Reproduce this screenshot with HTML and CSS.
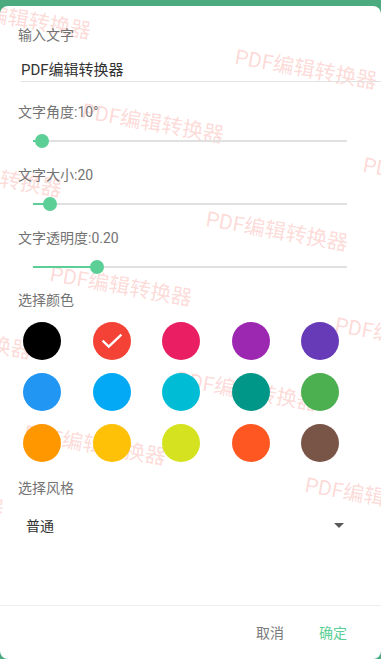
FILE: index.html
```html
<!DOCTYPE html>
<html lang="zh">
<head>
    <meta charset="UTF-8">
    <meta name="viewport" content="width=device-width, initial-scale=1.0">
    <title>水印设置</title>
    <link rel="stylesheet" href="styles.css">
</head>
<body>
    <div class="dialog">
        <!-- watermark preview, drawn behind the form -->
        <div class="watermarks">
            <span class="wm" style="left:-49px;top:-9px">PDF编辑转换器</span>
            <span class="wm" style="left:237px;top:41px">PDF编辑转换器</span>
            <span class="wm" style="left:84px;top:95px">PDF编辑转换器</span>
            <span class="wm" style="left:365px;top:149px">PDF编辑转换器</span>
            <span class="wm" style="left:-78px;top:149px">PDF编辑转换器</span>
            <span class="wm" style="left:208px;top:203px">PDF编辑转换器</span>
            <span class="wm" style="left:52px;top:258px">PDF编辑转换器</span>
            <span class="wm" style="left:337px;top:309px">PDF编辑转换器</span>
            <span class="wm" style="left:-108px;top:311px">PDF编辑转换器</span>
            <span class="wm" style="left:178px;top:363px">PDF编辑转换器</span>
            <span class="wm" style="left:26px;top:417px">PDF编辑转换器</span>
            <span class="wm" style="left:307px;top:469px">PDF编辑转换器</span>
            <span class="wm" style="left:-136px;top:469px">PDF编辑转换器</span>
        </div>

        <div class="dialog-body">
            <div class="field-label">输入文字</div>
            <div class="text-input">PDF编辑转换器</div>

            <div class="slider-group">
                <div class="field-label">文字角度:10°</div>
                <div class="slider">
                    <div class="slider-fill" style="width:2.8%"></div>
                    <div class="slider-thumb" style="left:2.8%"></div>
                </div>
            </div>

            <div class="slider-group">
                <div class="field-label">文字大小:20</div>
                <div class="slider">
                    <div class="slider-fill" style="width:5.4%"></div>
                    <div class="slider-thumb" style="left:5.4%"></div>
                </div>
            </div>

            <div class="slider-group">
                <div class="field-label">文字透明度:0.20</div>
                <div class="slider">
                    <div class="slider-fill" style="width:20.4%"></div>
                    <div class="slider-thumb" style="left:20.4%"></div>
                </div>
            </div>

            <div class="field-label section-label">选择颜色</div>
            <div class="color-grid">
                <div class="swatch black"></div>
                <div class="swatch red selected">
                    <svg width="38" height="38" viewBox="0 0 38 38">
                        <polyline points="10.5,19.5 15.8,24.6 27.5,13.4" fill="none" stroke="#fff" stroke-width="2.4" stroke-linecap="square"/>
                    </svg>
                </div>
                <div class="swatch pink"></div>
                <div class="swatch purple"></div>
                <div class="swatch deep-purple"></div>
                <div class="swatch blue"></div>
                <div class="swatch light-blue"></div>
                <div class="swatch cyan"></div>
                <div class="swatch teal"></div>
                <div class="swatch green"></div>
                <div class="swatch orange"></div>
                <div class="swatch amber"></div>
                <div class="swatch lime"></div>
                <div class="swatch deep-orange"></div>
                <div class="swatch brown"></div>
            </div>

            <div class="field-label section-label">选择风格</div>
            <div class="spinner">
                <span>普通</span>
                <span class="spinner-arrow"></span>
            </div>
        </div>

        <div class="dialog-footer">
            <button class="btn btn-cancel">取消</button>
            <button class="btn btn-ok">确定</button>
        </div>
    </div>
</body>
</html>
```

FILE: styles.css
```css
* {
    box-sizing: border-box;
    margin: 0;
    padding: 0;
}

body {
    background-color: #4caa7f;
    padding-top: 6px;
    font-family: Roboto, "Noto Sans CJK SC", sans-serif;
    overflow: hidden;
}

.dialog {
    position: relative;
    height: 653px;
    background-color: #fff;
    border-radius: 8px;
    overflow: hidden;
    display: flex;
    flex-direction: column;
}

/* watermark preview */
.watermarks {
    position: absolute;
    inset: 0;
    z-index: 0;
    pointer-events: none;
}

.wm {
    position: absolute;
    font-size: 21px;
    line-height: 21px;
    white-space: nowrap;
    color: rgba(244, 67, 54, 0.2);
    transform: rotate(10deg);
    transform-origin: 0 0;
}

.dialog-body {
    position: relative;
    z-index: 1;
    flex: 1;
    padding: 19px 0 0 18px;
}

.field-label {
    font-size: 14px;
    line-height: 20px;
    color: #737373;
}

.text-input {
    margin: 14px 0 0 3px;
    font-size: 15px;
    line-height: 22px;
    color: #333;
    border-bottom: 1px solid #e2e2e2;
}

.slider-group {
    margin-top: 20px;
}

.slider-group + .slider-group {
    margin-top: 17px;
}

.slider {
    position: relative;
    height: 14px;
    margin: 12px 34px 0 15px;
}

.slider::before {
    content: "";
    position: absolute;
    left: 0;
    right: 0;
    top: 6px;
    height: 2px;
    background-color: #e0e0e0;
}

.slider-fill {
    position: absolute;
    left: 0;
    top: 6px;
    height: 2px;
    background-color: #5ccf97;
}

.slider-thumb {
    position: absolute;
    top: 0;
    width: 14px;
    height: 14px;
    margin-left: -7px;
    border-radius: 50%;
    background-color: #5ccf97;
}

.section-label {
    margin-top: 16px;
}

.color-grid {
    display: grid;
    grid-template-columns: repeat(5, 38px);
    column-gap: 31.5px;
    row-gap: 13px;
    margin: 12px 0 0 5px;
}

.swatch {
    width: 38px;
    height: 38px;
    border-radius: 50%;
}

.swatch svg {
    display: block;
}

.black { background-color: #000; }
.red { background-color: #f44336; }
.pink { background-color: #e91e63; }
.purple { background-color: #9c27b0; }
.deep-purple { background-color: #673ab7; }
.blue { background-color: #2196f3; }
.light-blue { background-color: #03a9f4; }
.cyan { background-color: #00bcd4; }
.teal { background-color: #009688; }
.green { background-color: #4caf50; }
.orange { background-color: #ff9800; }
.amber { background-color: #ffc107; }
.lime { background-color: #d4e21f; }
.deep-orange { background-color: #ff5722; }
.brown { background-color: #795548; }

.spinner {
    display: flex;
    align-items: center;
    justify-content: space-between;
    height: 36px;
    margin-top: 9px;
    padding: 0 37px 0 8px;
    font-size: 14px;
    color: #333;
}

.spinner-arrow {
    width: 0;
    height: 0;
    border-left: 5px solid transparent;
    border-right: 5px solid transparent;
    border-top: 5px solid #5a5a5a;
}

.dialog-footer {
    position: relative;
    z-index: 1;
    height: 54px;
    border-top: 1px solid #eeeeee;
    display: flex;
    align-items: center;
    justify-content: flex-end;
    gap: 35px;
    padding-right: 34px;
}

.btn {
    border: none;
    background: none;
    font-family: Roboto, "Noto Sans CJK SC", sans-serif;
    font-size: 14px;
    line-height: 20px;
    cursor: pointer;
}

.btn-cancel {
    color: #7a7a7a;
}

.btn-ok {
    color: #5ccf97;
}
```
